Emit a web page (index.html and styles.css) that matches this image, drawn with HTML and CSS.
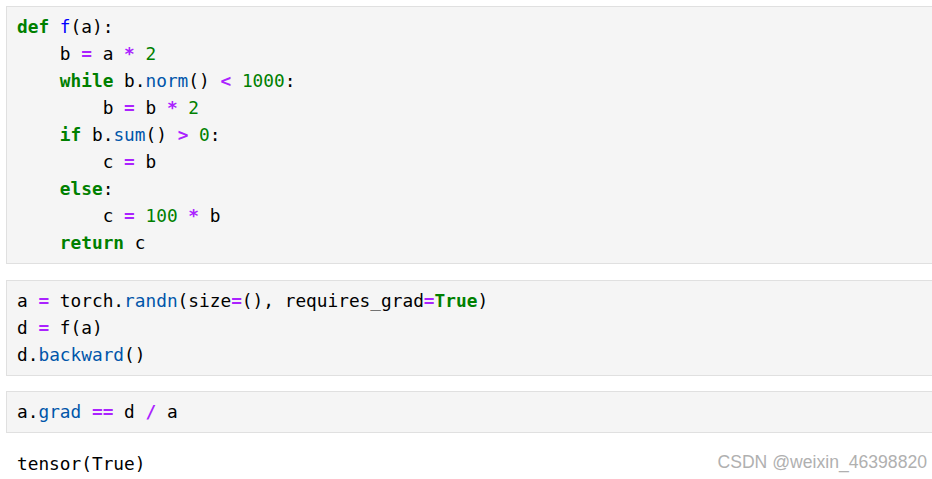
FILE: index.html
```html
<!DOCTYPE html>
<html>
<head>
<meta charset="utf-8">
<link rel="stylesheet" href="styles.css">
</head>
<body>
<div class="page">
  <div class="cell"><pre class="code"><span class="kw">def</span> <span class="def">f</span>(a):
    b <span class="op">=</span> a <span class="op">*</span> <span class="num">2</span>
    <span class="kw">while</span> b.<span class="prop">norm</span>() <span class="op">&lt;</span> <span class="num">1000</span>:
        b <span class="op">=</span> b <span class="op">*</span> <span class="num">2</span>
    <span class="kw">if</span> b.<span class="prop">sum</span>() <span class="op">&gt;</span> <span class="num">0</span>:
        c <span class="op">=</span> b
    <span class="kw">else</span>:
        c <span class="op">=</span> <span class="num">100</span> <span class="op">*</span> b
    <span class="kw">return</span> c</pre></div>
  <div class="cell"><pre class="code">a <span class="op">=</span> torch.<span class="prop">randn</span>(size<span class="op">=</span>(), requires_grad<span class="op">=</span><span class="kw">True</span>)
d <span class="op">=</span> f(a)
d.<span class="prop">backward</span>()</pre></div>
  <div class="cell"><pre class="code">a.<span class="prop">grad</span> <span class="op">==</span> d <span class="op">/</span> a</pre></div>
  <pre class="output">tensor(True)</pre>
  <div class="watermark">CSDN @weixin_46398820</div>
</div>
</body>
</html>
```
FILE: styles.css
```css
html, body {
  margin: 0;
  padding: 0;
  background: #ffffff;
  overflow: hidden;
}
.page {
  position: relative;
  width: 932px;
  height: 479px;
  padding: 6px 0 0 6px;
  box-sizing: border-box;
  display: flex;
  flex-direction: column;
  gap: 15.5px;
}
.cell {
  background: #f5f5f5;
  border: 1px solid #e0e0e0;
  margin-right: -2px;
  padding: 6px 10px 7px;
}
.code, .output {
  margin: 0;
  font-family: "DejaVu Sans Mono", monospace;
  font-size: 17.8px;
  line-height: 27px;
  color: #000;
  white-space: pre;
}
.output {
  padding: 1px 11px 0;
}
.kw { color: #008000; font-weight: bold; }
.def { color: #0000ff; }
.prop { color: #0055aa; }
.op { color: #aa22ff; font-weight: bold; }
.num { color: #008000; }
.watermark {
  position: absolute;
  right: 5px;
  bottom: 6px;
  font-family: "Liberation Sans", Arial, sans-serif;
  font-size: 17.6px;
  color: #b0b0b0;
}
```
